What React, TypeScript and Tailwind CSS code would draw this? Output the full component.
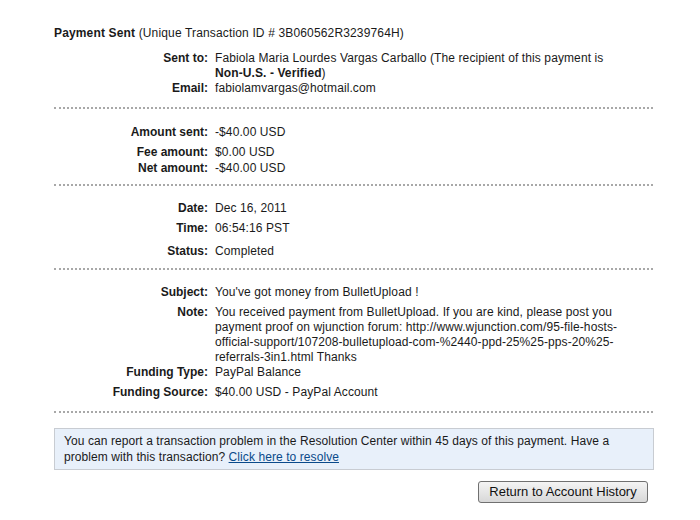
import React from "react";

interface RowProps {
  label: string;
  children: React.ReactNode;
  className?: string;
}

function Row({ label, children, className = "" }: RowProps) {
  return (
    <div className={`flex ${className}`}>
      <div className="w-[154px] shrink-0 text-right font-bold">{label}</div>
      <div className="w-[432px] pl-[7px] tracking-[0.1px]">{children}</div>
    </div>
  );
}

function Dots({ className = "" }: { className?: string }) {
  return <div className={`w-[599px] border-t-2 border-dotted border-[#a8a8a8] ${className}`} />;
}

export default function App() {
  return (
    <div
      className="w-[700px] h-[520px] bg-white text-[12px] leading-[15px] text-[#1a1a1a] pl-[54px] pt-[26px]"
      style={{ fontFamily: '"Liberation Sans", Arial, sans-serif' }}
    >
      <div className="w-[600px]">
        {/* Header */}
        <div className="tracking-[0.15px]">
          <span className="font-bold">Payment Sent</span> (Unique Transaction ID # 3B060562R3239764H)
        </div>

        {/* Recipient */}
        <Row label="Sent to:" className="mt-[10px]">
          Fabiola Maria Lourdes Vargas Carballo (The recipient of this payment is{" "}
          <span className="font-bold">
            <span className="whitespace-nowrap">Non-U.S.</span> - Verified
          </span>
          )
        </Row>
        <Row label="Email:">fabiolamvargas@hotmail.com</Row>

        <Dots className="mt-[11px]" />

        {/* Amounts */}
        <Row label="Amount sent:" className="mt-[16px]">-$40.00 USD</Row>
        <Row label="Fee amount:" className="mt-[5px]">$0.00 USD</Row>
        <Row label="Net amount:" className="mt-[1px]">-$40.00 USD</Row>

        <Dots className="mt-[8px]" />

        {/* Date */}
        <Row label="Date:" className="mt-[15px]">Dec 16, 2011</Row>
        <Row label="Time:" className="mt-[5px]">06:54:16 PST</Row>
        <Row label="Status:" className="mt-[8px]">Completed</Row>

        <Dots className="mt-[9px]" />

        {/* Message */}
        <Row label="Subject:" className="mt-[15px]">You've got money from BulletUpload !</Row>
        <Row label="Note:" className="mt-[5px]">
          You received payment from BulletUpload. If you are kind, please post you payment proof on wjunction
          forum: http://www.wjunction.com/95-file-hosts-official-support/107208-bulletupload-com-%2440-ppd-25%25-pps-20%25-referrals-3in1.html
          Thanks
        </Row>
        <Row label="Funding Type:">PayPal Balance</Row>
        <Row label="Funding Source:" className="mt-[5px]">$40.00 USD - PayPal Account</Row>

        <Dots className="mt-[11px]" />

        {/* Resolution notice */}
        <div className="mt-[15px] border border-[#c8ccd2] bg-[#e8f0fa] px-[9px] py-[4px] leading-[16px] tracking-[0.08px]">
          You can report a transaction problem in the Resolution Center within 45 days of this payment. Have a
          problem with this transaction?{" "}
          <a href="#" className="text-[#0a4a8a] underline">
            Click here to resolve
          </a>
        </div>

        <div className="mt-[11px] flex justify-end pr-[6px]">
          <button className="h-[22px] w-[170px] rounded-[3px] border border-[#707070] bg-gradient-to-b from-[#f4f4f4] to-[#d8d8d8] text-[13px] leading-[20px] text-[#111]">
            Return to Account History
          </button>
        </div>
      </div>
    </div>
  );
}
